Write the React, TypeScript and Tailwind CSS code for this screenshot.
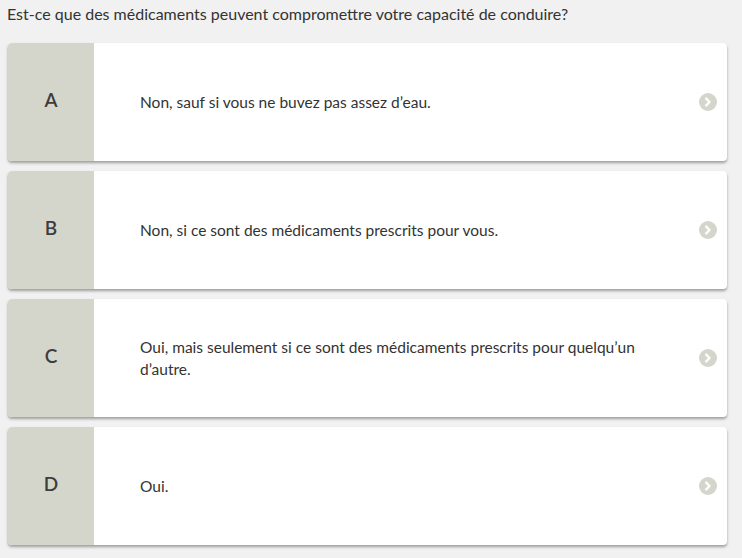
import React from 'react';

interface Answer {
  letter: string;
  text: string;
}

const answers: Answer[] = [
  { letter: 'A', text: 'Non, sauf si vous ne buvez pas assez d’eau.' },
  { letter: 'B', text: 'Non, si ce sont des médicaments prescrits pour vous.' },
  { letter: 'C', text: 'Oui, mais seulement si ce sont des médicaments prescrits pour quelqu’un d’autre.' },
  { letter: 'D', text: 'Oui.' },
];

const Chevron = () => (
  <svg width="18" height="18" viewBox="0 0 18 18">
    <circle cx="9" cy="9" r="9" fill="#d4d6cc" />
    <path d="M7.2 5.6 L10.6 9 L7.2 12.4" stroke="#fff" strokeWidth="2.4" fill="none" strokeLinecap="round" strokeLinejoin="round" />
  </svg>
);

const AnswerCard = ({ letter, text }: Answer) => (
  <button className="flex h-[118px] w-full cursor-pointer overflow-hidden rounded-[4px] bg-white text-left shadow-[0_2px_3px_rgba(0,0,0,0.35)]">
    <div className="flex h-full w-[86px] shrink-0 items-center justify-center bg-[#d4d6cc] pb-[3px] text-[19px] font-semibold text-[#3d3d3d]">
      {letter}
    </div>
    <div className="flex flex-1 items-center pb-px pl-[46px] pr-[30px] text-[15.5px] leading-[22px] text-[#333]">
      {text}
    </div>
    <div className="flex shrink-0 items-center pr-[10px]">
      <Chevron />
    </div>
  </button>
);

const App = () => {
  return (
    <div className="min-h-[558px] bg-[#f1f1f1] pl-2 pr-[15px] pt-[3px] pb-2 font-['Lato','Liberation_Sans',sans-serif]">
      <p className="-ml-px text-[16px] leading-[22px] text-[#333]">
        Est-ce que des médicaments peuvent compromettre votre capacité de conduire?
      </p>
      <div className="mt-[18px] flex flex-col gap-[10px]">
        {answers.map(a => (
          <AnswerCard key={a.letter} {...a} />
        ))}
      </div>
    </div>
  );
};

export default App;
